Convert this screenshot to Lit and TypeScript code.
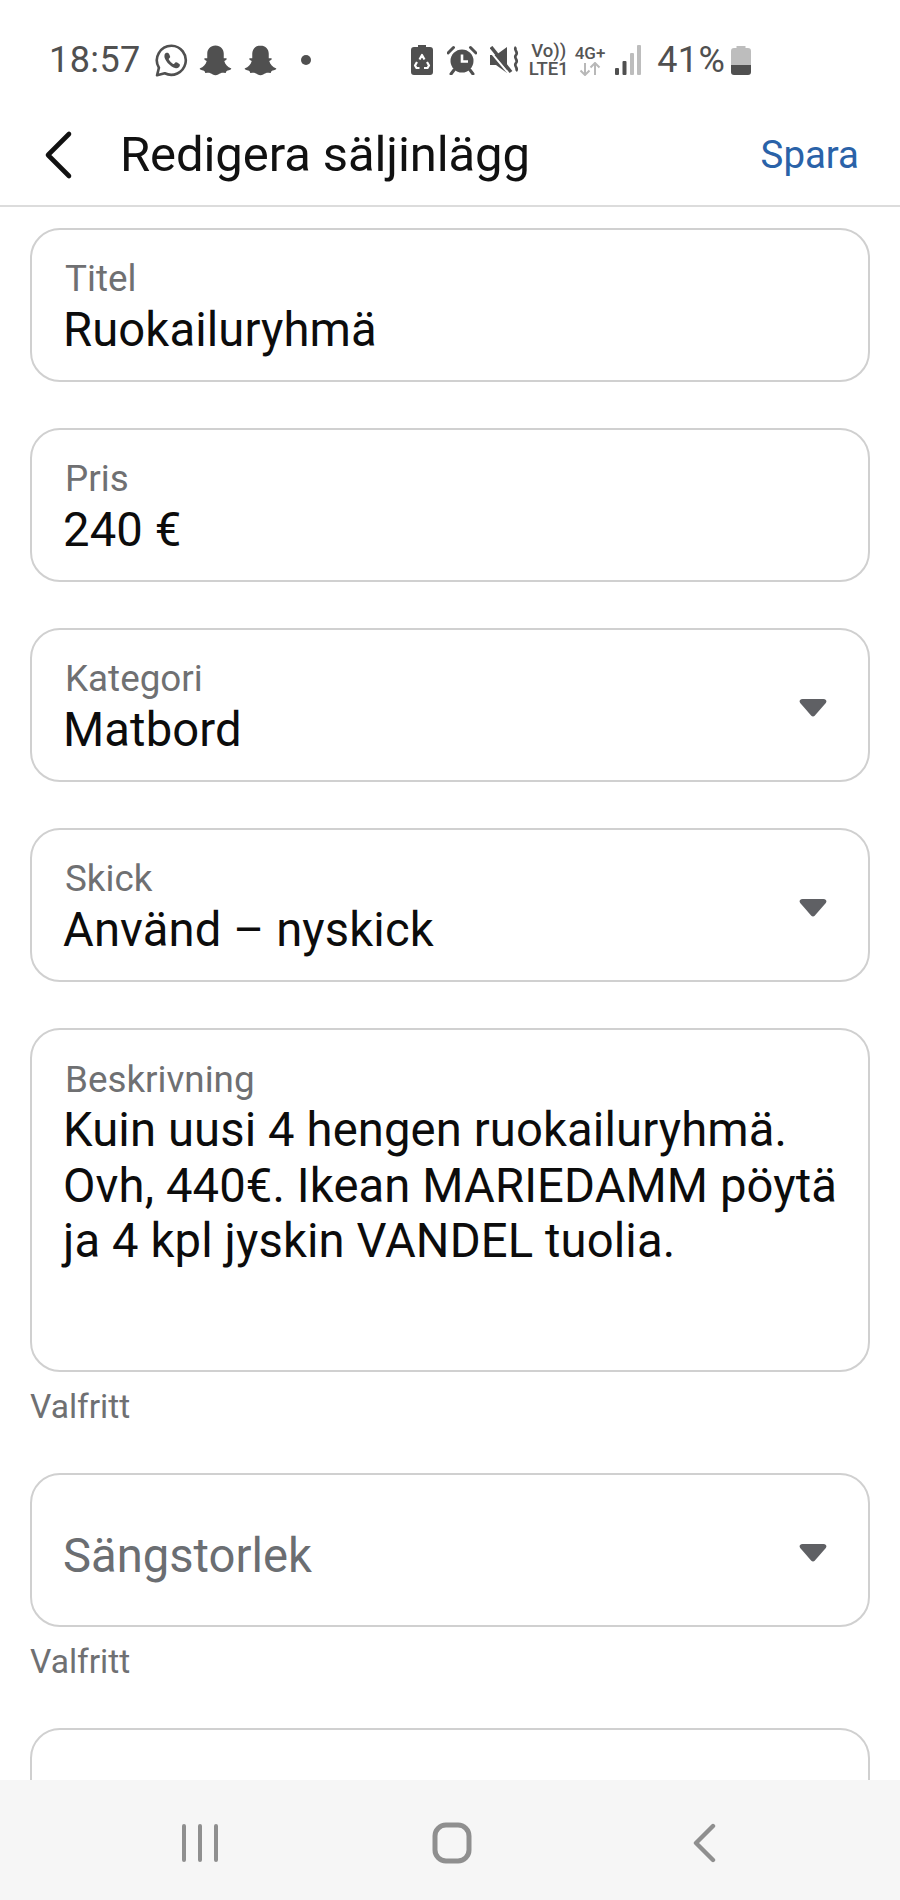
import { LitElement, html, css, svg } from "lit";
import { customElement } from "lit/decorators.js";

const ghost = svg`<path d="M16 1.500c-5 0-8 3.600-8 8v4.200c-1 .3-2.200-.4-2.800.4-.5.900.8 1.700 2.300 2.400-.8 3.400-3.500 6-6.500 7-.4.200-.4.700-.1 1 1 .9 3 .9 4.300 1.600.6.500.4 1.600 1 1.900 1 .3 2.700-.5 4.800.3 1.700.7 3 1.900 5 1.900s3.300-1.200 5-1.900c2.100-.8 3.800 0 4.800-.3.600-.3.400-1.400 1-1.900 1.300-.7 3.300-.7 4.300-1.600.3-.3.300-.8-.1-1-3-1-5.700-3.600-6.500-7 1.500-.7 2.800-1.500 2.300-2.400-.6-.8-1.800-.1-2.800-.4V9.500c0-4.400-3-8-8-8z"/>`;

@customElement("app-root")
export class AppRoot extends LitElement {
  static styles = css`
    :host { display: block; width: 900px; height: 1900px; background: #fff; font-family: Roboto, "Liberation Sans", sans-serif; overflow: hidden; }
    .page { height: 1900px; display: flex; flex-direction: column; }
    .status { height: 104px; flex: none; display: flex; align-items: center; padding: 16px 0 0 49px; box-sizing: border-box; color: #505050; }
    .time { font-size: 36px; letter-spacing: .4px; margin-right: 13px; }
    .status svg { display: block; flex: none; fill: #505050; }
    .wa { margin-right: 10px; }
    .ghost { margin-right: 12px; }
    .ghost.end { margin-right: 0; }
    .dot { width: 10px; height: 10px; border-radius: 50%; background: #505050; margin-left: 24px; }
    .right { margin-left: 100px; display: flex; align-items: center; }
    .two { display: flex; flex-direction: column; align-items: center; font-weight: 500; color: #555; }
    .vo { margin-right: 6px; font-size: 18.500px; line-height: 18px; white-space: pre-line; text-align: center; }
    .fourg { margin-right: 10px; font-size: 17px; line-height: 18px; }
    .saver { margin-right: 14px; }
    .alarm { margin-right: 13px; }
    .mute { margin-right: 9px; }
    .pct { font-size: 36px; margin: 0 6px 0 16px; letter-spacing: .3px; }
    .dim { fill: #bdbdbd !important; }
    .bar { height: 103px; flex: none; display: flex; align-items: center; border-bottom: 2px solid #dcdcdc; box-sizing: border-box; padding: 0 41px 0 44px; }
    .back { display: block; flex: none; margin-right: 47px; }
    .title { font-size: 49px; color: #111; flex: 1; letter-spacing: -.1px; }
    .save { font-size: 38.400px; color: #2a62a8; }
    .content { flex: 1; min-height: 0; overflow: hidden; padding: 21px 30px 0; display: flex; flex-direction: column; }
    .field { height: 154px; flex: none; box-sizing: border-box; border: 2px solid #d0d0d0; border-radius: 30px; padding: 0 31px; display: flex; align-items: center; margin-bottom: 46px; }
    .text { flex: 1; min-width: 0; padding-top: 7px; }
    .label { font-size: 36.800px; line-height: 40px; color: #6f7072; margin: 0 0 3px 2px; }
    .value { font-size: 47.200px; line-height: 56px; color: #0c0c0c; white-space: nowrap; letter-spacing: .12px; }
    .field.area { height: 344px; align-items: flex-start; padding-top: 23px; margin-bottom: 0; }
    .field.area .value { line-height: 55.600px; }
    .placeholder { font-size: 47.200px; color: #6b6e72; padding-top: 4px; }
    .field.opt { margin-bottom: 0; }
    .hint { font-size: 33.600px; line-height: 38px; color: #6f7072; margin: 16px 0 47px; flex: none; }
    .hint.last { margin-bottom: 47px; }
    .caret { display: block; flex: none; fill: #5f6064; margin: 5px 10px 0 0; }
    .nav { height: 120px; flex: none; background: #f6f6f6; display: flex; align-items: center; justify-content: center; padding: 6px 0 0 4px; box-sizing: border-box; }
    .nav svg { display: block; }
    .navitem { flex: none; display: flex; justify-content: center; width: 252px; }
  `;

  private caret() {
    return html`<svg class="caret" width="28" height="18" viewBox="0 0 28 18"><path d="M3.500 0h21c2.600 0 3.700 2.200 2.300 3.900L15.700 16.700c-.9 1-2.500 1-3.400 0L1.200 3.900C-.2 2.200.9 0 3.500 0z"/></svg>`;
  }

  render() {
    return html`<div class="page">
      <div class="status">
        <span class="time">18:57</span>
        <svg class="wa" width="35" height="35" viewBox="0 0 32 32"><path d="M16 2.500A13.300 13.300 0 0 0 4.500 22.600L2.800 29.500l7-1.800A13.300 13.300 0 1 0 16 2.500z" fill="none" stroke="#505050" stroke-width="2.400" stroke-linejoin="round"/><path d="M11.500 9c-.8 0-2 1-2 3 0 3 4.500 9.500 10.500 11 2 .2 3.700-1.300 3.700-3 0-.7-3-2.500-3.800-2.300-.6.200-1 1.300-1.700 1.600-1.500-.3-4.300-3-4.800-4.700.3-.6 1.400-1 1.400-1.700 0-.8-1.300-3.900-2.300-3.900z"/></svg>
        <svg class="ghost" width="33" height="32" viewBox="0 0 32 31">${ghost}</svg>
        <svg class="ghost end" width="33" height="32" viewBox="0 0 32 31">${ghost}</svg>
        <span class="dot"></span>
        <div class="right">
          <svg class="saver" width="22" height="30" viewBox="0 0 22 30"><path d="M7 0h8v2h4a3 3 0 0 1 3 3v22a3 3 0 0 1-3 3H3a3 3 0 0 1-3-3V5a3 3 0 0 1 3-3h4z"/><path d="M8.500 14.500l2.500-4.500 2.500 4.500M16 17l2 3.500-1.500 2.500h-3.500M8.500 23H5.500L4 20.500 6 17" fill="none" stroke="#fff" stroke-width="2.200" stroke-linejoin="round"/></svg>
          <svg class="alarm" width="30" height="30" viewBox="0 0 30 30"><circle cx="15" cy="16" r="11.500"/><path d="M1 8l5.500-5.500M29 8l-5.500-5.500M7 25l-3 4M23 25l3 4" stroke="#505050" stroke-width="3" fill="none" stroke-linecap="round"/><path d="M15 9.500v7h6" stroke="#fff" stroke-width="2.600" fill="none"/></svg>
          <svg class="mute" width="30" height="28" viewBox="0 0 30 28"><path d="M0 9h6l11-8v26l-11-8H0z"/><path d="M-1 4l20 24" stroke="#fff" stroke-width="2"/><path d="M1 1l20 25" stroke="#505050" stroke-width="3.500"/><path d="M26 1c-3 3 3 5 0 8s3 5 0 8 3 5 0 8" stroke="#505050" stroke-width="2.600" fill="none"/></svg>
          <div class="two vo">Vo))
LTE1</div>
          <div class="two fourg"><span>4G+</span>
            <svg width="22" height="14" viewBox="0 0 22 14"><path d="M6 1v12M1.500 8.500L6 13l4.500-4.500M16 13V1M11.500 5.500L16 1l4.500 4.500" fill="none" stroke="#b8b8b8" stroke-width="2"/></svg></div>
          <svg width="26" height="30" viewBox="0 0 26 30"><rect x="0" y="23" width="4" height="7" rx="1"/><rect x="7.500" y="16" width="4" height="14" rx="1"/><rect class="dim" x="15" y="8" width="4" height="22" rx="1"/><rect class="dim" x="22" y="0" width="4" height="30" rx="1"/></svg>
          <span class="pct">41%</span>
          <svg width="20" height="29" viewBox="0 0 20 29"><path class="dim" d="M5.500 0h9v2H17a3 3 0 0 1 3 3v14H0V5a3 3 0 0 1 3-3h2.500z"/><path d="M0 19h20v7a3 3 0 0 1-3 3H3a3 3 0 0 1-3-3z"/></svg>
        </div>
      </div>
      <div class="bar">
        <svg class="back" width="29" height="50" viewBox="0 0 29 50"><path d="M25 4L4 25l21 21" fill="none" stroke="#111" stroke-width="4.600" stroke-linecap="round" stroke-linejoin="round"/></svg>
        <span class="title">Redigera säljinlägg</span>
        <span class="save">Spara</span>
      </div>
      <div class="content">
        <div class="field"><div class="text"><div class="label">Titel</div><div class="value">Ruokailuryhmä</div></div></div>
        <div class="field"><div class="text"><div class="label">Pris</div><div class="value">240 €</div></div></div>
        <div class="field"><div class="text"><div class="label">Kategori</div><div class="value">Matbord</div></div>${this.caret()}</div>
        <div class="field"><div class="text"><div class="label">Skick</div><div class="value">Använd – nyskick</div></div>${this.caret()}</div>
        <div class="field area"><div class="text"><div class="label">Beskrivning</div><div class="value">Kuin uusi 4 hengen ruokailuryhmä.<br />Ovh, 440€. Ikean MARIEDAMM pöytä<br />ja 4 kpl jyskin VANDEL tuolia.</div></div></div>
        <div class="hint">Valfritt</div>
        <div class="field opt"><div class="text"><div class="placeholder">Sängstorlek</div></div>${this.caret()}</div>
        <div class="hint last">Valfritt</div>
        <div class="field"></div>
      </div>
      <div class="nav">
        <div class="navitem"><svg width="38" height="38" viewBox="0 0 38 38"><path d="M3 2v34M19 2v34M35 2v34" stroke="#8f8f8f" stroke-width="4" stroke-linecap="round" fill="none"/></svg></div>
        <div class="navitem"><svg width="40" height="42" viewBox="0 0 40 42"><rect x="3" y="3" width="34" height="36" rx="11" fill="none" stroke="#8f8f8f" stroke-width="5"/></svg></div>
        <div class="navitem"><svg width="26" height="40" viewBox="0 0 26 40"><path d="M22 3L5 20l17 17" fill="none" stroke="#8f8f8f" stroke-width="4.400" stroke-linecap="round" stroke-linejoin="round"/></svg></div>
      </div>
    </div>`;
  }
}
